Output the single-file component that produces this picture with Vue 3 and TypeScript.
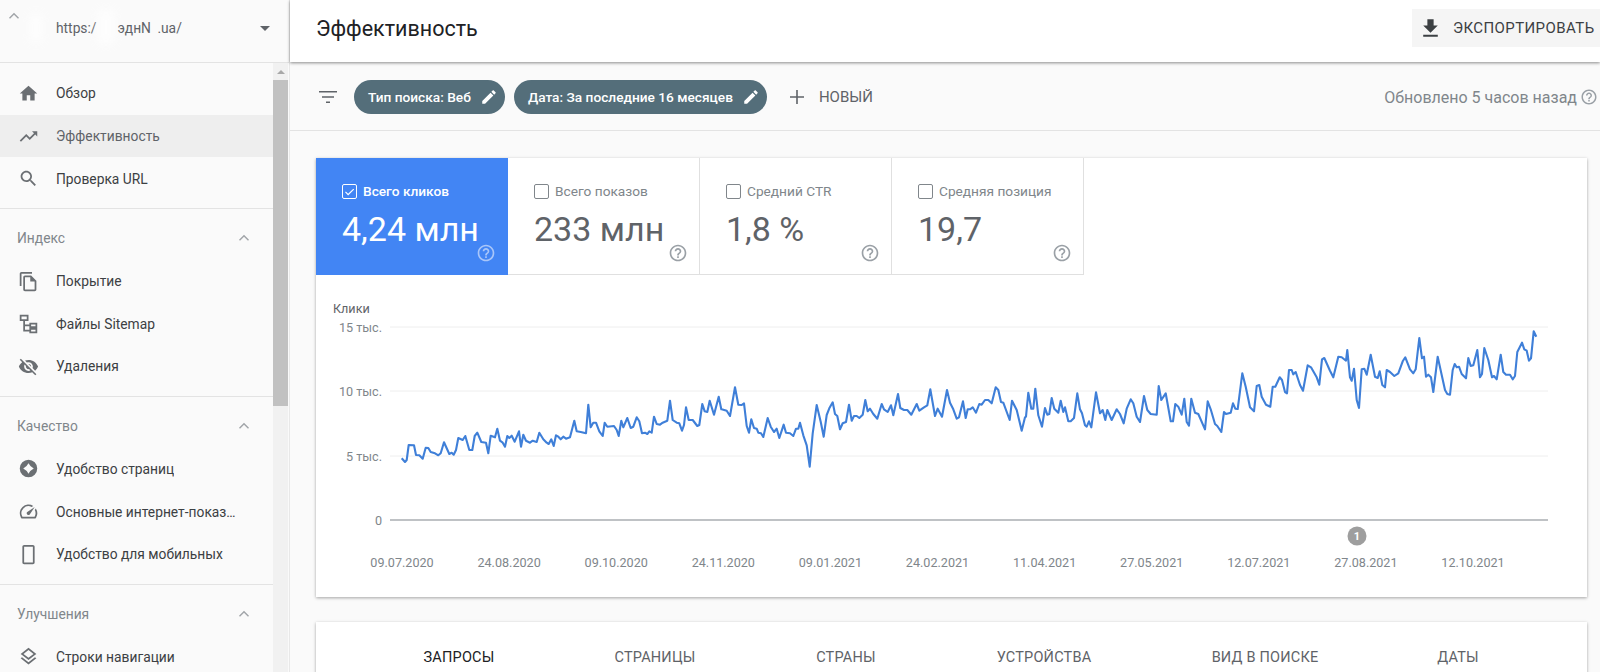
<script setup lang="ts">
import { computed } from 'vue';

type NavItem = { label: string; icon: string; active?: boolean };
type NavSection = { title?: string; items: NavItem[] };
type Metric = { label: string; value: string; selected?: boolean };

const icons: Record<string, string> = {
  home: 'M10 20v-6h4v6h5v-8h3L12 3 2 12h3v8z',
  trend: 'M16 6l2.29 2.29-4.88 4.88-4-4L2 16.59 3.41 18l6-6 4 4 6.3-6.29L22 12V6z',
  search: 'M15.5 14h-.79l-.28-.27C15.41 12.59 16 11.11 16 9.5 16 5.91 13.09 3 9.5 3S3 5.91 3 9.5 5.91 16 9.5 16c1.61 0 3.09-.59 4.23-1.57l.27.28v.79l5 4.99L20.49 19l-4.99-5zm-6 0C7.01 14 5 11.99 5 9.5S7.01 5 9.5 5 14 7.01 14 9.5 11.99 14 9.5 14z',
  copy: 'M16 1H4c-1.1 0-2 .9-2 2v14h2V3h12V1zm-1 4H8c-1.1 0-1.99.9-1.99 2L6 21c0 1.1.89 2 1.99 2H19c1.1 0 2-.9 2-2V11l-6-6zM8 21V7h6v5h5v9H8z',
  sitemap: 'M2 2h10v7H8v4h5v-2h9v6h-9v-2H8v4h5v-2h9v6h-9v-2H6V9H2V2zm2 2v3h6V4H4zm11 9v2h5v-2h-5zm0 6v2h5v-2h-5z',
  eyeOff: 'M12 7c2.76 0 5 2.24 5 5 0 .65-.13 1.26-.36 1.83l2.92 2.92c1.51-1.26 2.7-2.89 3.43-4.75-1.73-4.39-6-7.5-11-7.5-1.4 0-2.74.25-3.98.7l2.16 2.16C10.74 7.13 11.35 7 12 7zM2 4.27l2.28 2.28.46.46C3.08 8.3 1.78 10.02 1 12c1.73 4.39 6 7.5 11 7.5 1.55 0 3.03-.3 4.38-.84l.42.42L19.73 22 21 20.73 3.27 3 2 4.27zM7.53 9.8l1.55 1.55c-.05.21-.08.43-.08.65 0 1.66 1.34 3 3 3 .22 0 .44-.03.65-.08l1.55 1.55c-.67.33-1.41.53-2.2.53-2.76 0-5-2.24-5-5 0-.79.2-1.53.53-2.2zm4.31-.78l3.15 3.15.02-.16c0-1.66-1.34-3-3-3l-.17.01z',
  star: 'M12 2a10 10 0 1 0 0 20 10 10 0 0 0 0-20zm0 4q2 4 6 6-4 2-6 6-2-4-6-6 4-2 6-6z',
  speed: 'M20.38 8.57l-1.23 1.85a8 8 0 0 1-.22 7.58H5.07A8 8 0 0 1 15.58 6.85l1.85-1.23A10 10 0 0 0 3.35 19a2 2 0 0 0 1.72 1h13.85a2 2 0 0 0 1.74-1 10 10 0 0 0-.27-10.44zm-9.79 6.84a2 2 0 0 0 2.83 0l5.66-8.49-8.49 5.66a2 2 0 0 0 0 2.83z',
  phone: 'M7 1h10c1.1 0 2 .9 2 2v18c0 1.1-.9 2-2 2H7c-1.1 0-2-.9-2-2V3c0-1.1.9-2 2-2zm0 2v18h10V3H7z',
  layers: 'M11.99 18.54l-7.37-5.73L3 14.07l9 7 9-7-1.63-1.27-7.38 5.74zM12 16l7.36-5.73L21 9l-9-7-9 7 1.63 1.27L12 16zm0-11.47L17.74 9 12 13.47 6.26 9 12 4.53z',
  download: 'M19 9h-4V3H9v6H5l7 7 7-7zM5 18v2h14v-2H5z',
  edit: 'M3 17.25V21h3.75L17.81 9.94l-3.75-3.75L3 17.25zM20.71 7.04c.39-.39.39-1.02 0-1.41l-2.34-2.34c-.39-.39-1.02-.39-1.41 0l-1.83 1.83 3.75 3.75 1.83-1.83z',
  add: 'M19 12.8h-6.2V19h-1.6v-6.2H5v-1.6h6.2V5h1.6v6.2H19v1.6z',
  help: 'M11 18h2v-2h-2v2zm1-16C6.48 2 2 6.48 2 12s4.48 10 10 10 10-4.48 10-10S17.52 2 12 2zm0 18c-4.41 0-8-3.59-8-8s3.59-8 8-8 8 3.59 8 8-3.59 8-8 8zm0-14c-2.21 0-4 1.79-4 4h2c0-1.1.9-2 2-2s2 .9 2 2c0 2-3 1.75-3 5h2c0-2.25 3-2.5 3-5 0-2.21-1.79-4-4-4z',
  filter: 'M10 18h4v-1.5h-4V18zM3 6v1.5h18V6H3zm3 6.75h12v-1.5H6v1.5z',
  chevron: 'M12 8l-6 6 1.2 1.2L12 10.4l4.8 4.8L18 14z',
  caret: 'M7 10l5 5 5-5z',
  check: 'M9.5 16.2L5.3 12l-1.5 1.5 5.7 5.7L20.5 8.2 19 6.7z',
};

const sections: NavSection[] = [
  {
    items: [
      { label: 'Обзор', icon: 'home' },
      { label: 'Эффективность', icon: 'trend', active: true },
      { label: 'Проверка URL', icon: 'search' },
    ],
  },
  {
    title: 'Индекс',
    items: [
      { label: 'Покрытие', icon: 'copy' },
      { label: 'Файлы Sitemap', icon: 'sitemap' },
      { label: 'Удаления', icon: 'eyeOff' },
    ],
  },
  {
    title: 'Качество',
    items: [
      { label: 'Удобство страниц', icon: 'star' },
      { label: 'Основные интернет-показатели', icon: 'speed' },
      { label: 'Удобство для мобильных', icon: 'phone' },
    ],
  },
  {
    title: 'Улучшения',
    items: [{ label: 'Строки навигации', icon: 'layers' }],
  },
];

const metrics: Metric[] = [
  { label: 'Всего кликов', value: '4,24 млн', selected: true },
  { label: 'Всего показов', value: '233 млн' },
  { label: 'Средний CTR', value: '1,8 %' },
  { label: 'Средняя позиция', value: '19,7' },
];

const tabs = ['ЗАПРОСЫ', 'СТРАНИЦЫ', 'СТРАНЫ', 'УСТРОЙСТВА', 'ВИД В ПОИСКЕ', 'ДАТЫ'];

// the svg keeps page coordinates, so everything below is read straight off the picture
const gridLines = [
  { y: 327, label: '15 тыс.' },
  { y: 391, label: '10 тыс.' },
  { y: 456, label: '5 тыс.' },
];

const dates = [
  '09.07.2020', '24.08.2020', '09.10.2020', '24.11.2020', '09.01.2021', '24.02.2021',
  '11.04.2021', '27.05.2021', '12.07.2021', '27.08.2021', '12.10.2021',
].map((label, i) => ({ label, x: 402 + i * 107.1 }));

// clicks line, traced in three pieces (x, y pairs at 3x, each from its own left edge)
const traces: { left: number; pts: number[] }[] = [
  {
    left: 310,
    pts: [275,505,285,516,290,510,296,465,312,466,318,495,328,496,338,506,347,473,355,474,362,486,375,490,385,496,392,490,402,457,418,492,425,488,431,494,438,480,445,444,458,450,466,438,478,480,487,480,494,438,502,428,514,456,528,458,535,490,542,437,555,442,562,416,570,452,578,458,585,470,592,438,598,444,605,437,614,455,627,424,633,470,640,434,648,452,660,458,668,452,680,456,688,428,700,448,710,458,716,462,724,448,731,468,738,436,745,440,752,448,760,440,768,446,780,442,793,392,800,424,812,426,828,430,835,344,842,412,850,398,858,398,868,424,878,438,884,398,892,410,912,408,920,420,926,438,934,392,940,412,952,384,962,414,970,410,980,382,988,394,996,430,1005,428,1012,432,1018,424,1025,428,1032,380,1040,402,1050,404,1058,398,1072,392,1080,332,1088,390,1100,398,1108,400,1116,422,1122,405,1128,352,1136,390,1148,390,1162,408,1168,405,1177,342,1184,364,1192,366,1199,332,1212,374,1226,320,1234,358],
  },
  {
    left: 720,
    pts: [5,358,20,362,30,378,45,292,55,344,65,345,72,340,80,408,87,428,94,388,102,414,110,416,115,428,123,430,130,441,143,384,152,410,162,426,170,416,178,444,191,404,198,428,210,430,220,438,228,416,235,416,240,398,250,436,260,466,269,530,278,430,290,345,302,395,311,440,320,375,328,355,338,337,345,372,352,378,360,418,368,400,378,396,387,344,395,392,402,378,410,378,418,384,428,374,436,330,443,364,450,356,460,372,472,386,485,342,492,358,503,366,513,346,520,376,534,312,541,354,552,360,562,360,574,374,590,342,598,362,612,352,622,346,631,298,645,378,653,356,666,380,681,300,690,338,700,358,710,386,717,382,729,334,737,384,743,358,750,358,758,352,768,368,778,342,785,344,795,330,805,330,815,340,827,292,835,300,843,336,850,338,869,390,876,332,890,360,898,392,905,422,915,382,918,380,925,308,934,356,940,356,946,296,955,376,966,410,975,354,982,374,988,372,995,324,1003,356,1015,368,1022,332,1030,366,1035,352,1045,394,1052,394,1062,384,1072,310,1080,358,1086,370,1095,406,1100,410,1107,394,1114,412,1128,307,1140,370,1148,360,1156,390,1162,360,1175,390,1190,358,1200,372,1211,400,1220,356,1232,328,1240,340,1250,380,1260,396],
  },
  {
    left: 1130,
    pts: [30,396,42,318,52,360,62,372,80,374,86,288,94,330,107,310,122,394,129,394,136,342,145,350,155,374,163,326,170,396,177,407,184,326,195,368,205,372,225,418,233,334,242,358,255,402,262,408,274,426,282,366,288,372,302,368,309,340,316,356,323,357,337,250,347,290,360,352,372,364,380,288,388,285,395,320,408,344,421,350,428,290,436,290,449,262,456,270,465,306,471,310,477,240,485,240,490,253,497,246,510,285,519,302,533,226,543,232,560,262,568,284,576,208,583,204,600,242,610,262,625,200,635,202,648,212,652,180,660,262,665,272,672,236,680,330,687,354,695,238,703,236,710,254,722,194,735,260,743,264,749,244,757,285,765,292,770,240,780,246,793,258,805,250,818,214,826,202,840,238,850,250,857,238,868,144,876,205,882,200,888,260,895,254,903,262,910,306,923,200,935,255,945,300,952,312,960,314,968,240,974,222,980,232,987,230,995,252,1008,265,1015,204,1022,228,1030,226,1042,180,1050,262,1056,252,1063,174,1075,210,1086,262,1092,258,1100,268,1112,194,1120,246,1128,254,1140,254,1148,268,1155,258,1162,186,1176,158,1183,178,1190,182,1197,212,1203,205,1211,124,1219,140],
  },
];

const linePoints = computed(() => {
  const out: string[] = [];
  for (const t of traces) {
    for (let i = 0; i < t.pts.length; i += 2) {
      out.push(`${(t.left + t.pts[i] / 3).toFixed(1)},${(290 + t.pts[i + 1] / 3).toFixed(1)}`);
    }
  }
  return out.join(' ');
});
</script>

<template>
  <div class="page">
    <aside class="sidebar">
      <div class="site-head">
        <svg class="site-chevron" viewBox="0 0 24 24"><path :d="icons.chevron" /></svg>
        <span class="smudge smudge-logo"></span>
        <span class="site-url"><span>https:/</span><span class="site-url-rest">эднN .ua/</span></span>
        <span class="smudge smudge-url"></span>
        <svg class="site-caret" viewBox="0 0 24 24"><path :d="icons.caret" /></svg>
      </div>
      <div class="nav-wrap">
        <nav class="nav">
          <section v-for="(section, i) in sections" :key="i" class="nav-section">
            <div v-if="section.title" class="nav-title">
              <span>{{ section.title }}</span>
              <svg viewBox="0 0 24 24"><path :d="icons.chevron" /></svg>
            </div>
            <div v-for="item in section.items" :key="item.label" class="nav-item" :class="{ active: item.active }">
              <svg viewBox="0 0 24 24"><path :d="icons[item.icon]" /></svg>
              <span>{{ item.label }}</span>
            </div>
          </section>
        </nav>
        <div class="scrollbar">
          <div class="scroll-arrow"></div>
          <div class="scroll-thumb"></div>
        </div>
      </div>
    </aside>

    <main class="main">
      <header class="top">
        <h1>Эффективность</h1>
        <div class="export">
          <svg viewBox="0 0 24 24"><path :d="icons.download" /></svg>
          <span>ЭКСПОРТИРОВАТЬ</span>
        </div>
      </header>

      <div class="filters">
        <svg class="filter-icon" viewBox="0 0 24 24"><path :d="icons.filter" /></svg>
        <div class="chip">
          <span>Тип поиска: Веб</span>
          <svg viewBox="0 0 24 24"><path :d="icons.edit" /></svg>
        </div>
        <div class="chip">
          <span>Дата: За последние 16 месяцев</span>
          <svg viewBox="0 0 24 24"><path :d="icons.edit" /></svg>
        </div>
        <div class="add-new">
          <svg viewBox="0 0 24 24"><path :d="icons.add" /></svg>
          <span>НОВЫЙ</span>
        </div>
        <div class="updated">
          <span>Обновлено 5 часов назад</span>
          <svg viewBox="0 0 24 24"><path :d="icons.help" /></svg>
        </div>
      </div>

      <div class="content">
        <div class="card chart-card">
          <div class="metrics">
            <div v-for="m in metrics" :key="m.label" class="metric" :class="{ selected: m.selected }">
              <div class="metric-label">
                <span class="checkbox">
                  <svg v-if="m.selected" viewBox="0 0 24 24"><path :d="icons.check" /></svg>
                </span>
                <span>{{ m.label }}</span>
              </div>
              <div class="metric-value">{{ m.value }}</div>
              <svg class="metric-help" viewBox="0 0 24 24"><path :d="icons.help" /></svg>
            </div>
          </div>
          <svg class="chart" viewBox="316 275 1271 322">
            <text x="333" y="313" class="axis-title">Клики</text>
            <g v-for="g in gridLines" :key="g.y">
              <line x1="390" x2="1548" :y1="g.y" :y2="g.y" class="grid" />
              <text x="382" :y="g.y + 4.5" text-anchor="end" class="tick">{{ g.label }}</text>
            </g>
            <line x1="390" x2="1548" y1="520" y2="520" class="axis" />
            <text x="382" y="524.5" text-anchor="end" class="tick">0</text>
            <polyline :points="linePoints" class="series" />
            <circle cx="1357" cy="536" r="9.5" class="marker" />
            <text x="1357" y="540" text-anchor="middle" class="marker-text">1</text>
            <text v-for="d in dates" :key="d.label" :x="d.x" y="566.5" text-anchor="middle" class="tick">{{ d.label }}</text>
          </svg>
        </div>

        <div class="card tabs-card">
          <div v-for="(tab, i) in tabs" :key="tab" class="tab" :class="{ current: i === 0 }">{{ tab }}</div>
        </div>
      </div>
    </main>
  </div>
</template>

<style>
html,
body {
  margin: 0;
  overflow: hidden;
}
</style>

<style scoped>
.page {
  display: flex;
  width: 1600px;
  height: 672px;
  overflow: hidden;
  background: #fafafa;
  font-family: Roboto, "Liberation Sans", sans-serif;
}

.sidebar {
  display: flex;
  flex-direction: column;
  flex: 0 0 290px;
  box-sizing: border-box;
  border-right: 1px solid #e8e8e8;
  background: #fafafa;
}

.site-head {
  display: flex;
  align-items: center;
  flex: 0 0 63px;
  box-sizing: border-box;
  height: 63px;
  border-bottom: 1px solid #e3e3e3;
  position: relative;
  padding: 0 12px 6px 56px;
}

.site-chevron {
  position: absolute;
  left: 4px;
  top: 6px;
  width: 20px;
  height: 20px;
  fill: #a0a4a8;
}

/* the blurred-out logo and part of the address */
.smudge {
  position: absolute;
  background: #fff;
  opacity: 0.7;
  filter: blur(4px);
}

.smudge-logo {
  left: 30px;
  top: 14px;
  width: 12px;
  height: 28px;
}

.smudge-url {
  left: 98px;
  top: 10px;
  width: 16px;
  height: 34px;
}

.site-url {
  flex: 1;
  display: flex;
  font-size: 13.8px;
  word-spacing: 3px;
  color: #5f6368;
}

.site-url-rest {
  margin-left: 21px;
}

.site-caret {
  width: 24px;
  height: 24px;
  fill: #5f6368;
}

.nav-wrap {
  display: flex;
  flex: 1;
  min-height: 0;
}

.nav {
  flex: 0 0 273px;
  width: 273px;
  padding-top: 1px;
}

.nav-section {
  padding: 8px 0;
  border-bottom: 1px solid #e3e3e3;
}

.nav-title {
  display: flex;
  align-items: center;
  justify-content: space-between;
  height: 42.7px;
  padding: 0 19px 0 17px;
  font-size: 13.8px;
  color: #80868b;
}

.nav-title svg {
  width: 20px;
  height: 20px;
  fill: #a0a4a8;
}

.nav-item {
  display: flex;
  align-items: center;
  height: 42.7px;
  padding: 0 34px 0 17.5px;
  font-size: 13.8px;
  color: #3c4043;
}

.nav-item svg {
  flex: 0 0 21px;
  width: 21px;
  height: 21px;
  margin-right: 17.5px;
  fill: #6b6f73;
}

.nav-item span {
  white-space: nowrap;
  overflow: hidden;
  text-overflow: ellipsis;
}

.nav-item.active {
  background: #eeeeee;
  color: #5f6368;
}

.scrollbar {
  flex: 0 0 15px;
  background: #f1f1f1;
}

.scroll-arrow {
  height: 17px;
  position: relative;
}

.scroll-arrow::after {
  content: "";
  position: absolute;
  left: 4px;
  top: 7px;
  border-left: 4px solid transparent;
  border-right: 4px solid transparent;
  border-bottom: 4px solid #a8a8a8;
}

.scroll-thumb {
  height: 326px;
  background: #c1c1c1;
}

.main {
  flex: 1;
  min-width: 0;
  display: flex;
  flex-direction: column;
}

.top {
  display: flex;
  align-items: center;
  justify-content: space-between;
  flex: 0 0 62px;
  padding: 0 0 6px 26px;
  box-sizing: border-box;
  background: #fff;
  box-shadow: 0 1px 3px rgba(0, 0, 0, 0.45);
  position: relative;
}

.top h1 {
  margin: 0;
  font-size: 21.5px;
  font-weight: 400;
  color: #202124;
}

.export {
  display: flex;
  align-items: center;
  width: 188px;
  height: 38px;
  padding-left: 6px;
  box-sizing: border-box;
  background: #f5f5f5;
  font-size: 15px;
  letter-spacing: 0.4px;
  color: #3c4043;
  white-space: nowrap;
}

.export svg {
  width: 25px;
  height: 25px;
  margin-right: 10px;
  fill: #3c4043;
}

.filters {
  display: flex;
  align-items: center;
  flex: 0 0 69px;
  box-sizing: border-box;
  padding: 2px 0 0 26px;
  border-bottom: 1px solid #e3e3e3;
}

.filter-icon {
  width: 24px;
  height: 24px;
  margin-right: 14px;
  fill: #5f6368;
}

.chip {
  display: flex;
  align-items: center;
  height: 34px;
  margin-right: 9px;
  padding: 0 7px 0 14px;
  border-radius: 17px;
  background: #546e7a;
  color: #fff;
  font-size: 13.7px;
  font-weight: 500;
  white-space: nowrap;
}

.chip svg {
  width: 18px;
  height: 18px;
  margin-left: 9px;
  fill: #fff;
}

.add-new {
  display: flex;
  align-items: center;
  margin-left: 9px;
  font-size: 15px;
  color: #5f6368;
}

.add-new svg {
  width: 24px;
  height: 24px;
  margin-right: 10px;
  fill: #5f6368;
}

.updated {
  display: flex;
  align-items: center;
  margin-left: auto;
  padding-right: 2px;
  font-size: 16px;
  color: #80868b;
  white-space: nowrap;
}

.updated svg {
  width: 18px;
  height: 18px;
  margin-left: 3px;
  fill: #9aa0a6;
}

.content {
  padding: 27px 13px 0 26px;
}

.card {
  background: #fff;
  box-shadow: 0 1px 3px rgba(0, 0, 0, 0.35);
}

.metrics {
  display: flex;
  height: 117px;
}

.metric {
  position: relative;
  flex: 0 0 192px;
  box-sizing: border-box;
  padding: 26px 0 0 26px;
  border-right: 1px solid #e0e0e0;
  border-bottom: 1px solid #e0e0e0;
  color: #80868b;
}

.metric.selected {
  background: #4285f4;
  border-color: #4285f4;
  color: #fff;
}

.metric-label {
  display: flex;
  align-items: center;
  font-size: 13.7px;
  height: 14px;
}

.metric.selected .metric-label {
  font-weight: 500;
}

.checkbox {
  display: flex;
  box-sizing: border-box;
  width: 15px;
  height: 15px;
  margin-right: 6px;
  border: 1px solid #80868b;
  border-radius: 2px;
}

.metric.selected .checkbox {
  border-color: #fff;
}

.checkbox svg {
  width: 13px;
  height: 13px;
  fill: #fff;
}

.metric-value {
  margin-top: 11px;
  font-size: 34px;
  line-height: 40px;
  color: #5f6368;
}

.metric.selected .metric-value {
  color: #fff;
}

.metric-help {
  position: absolute;
  right: 11px;
  bottom: 11px;
  width: 20px;
  height: 20px;
  fill: #9aa0a6;
}

.metric.selected .metric-help {
  fill: #a9c6f9;
}

.chart {
  display: block;
  width: 1271px;
  height: 322px;
}

.chart text {
  font-family: Roboto, "Liberation Sans", sans-serif;
}

.axis-title {
  font-size: 12.6px;
  fill: #5f6368;
}

.tick {
  font-size: 12.6px;
  fill: #80868b;
}

.grid {
  stroke: #eeeeee;
  stroke-width: 1;
}

.axis {
  stroke: #80868b;
  stroke-width: 1.2;
}

.series {
  fill: none;
  stroke: #3f7fd8;
  stroke-width: 2.1;
  stroke-linejoin: round;
}

.marker {
  fill: #9e9e9e;
}

.marker-text {
  font-size: 11px;
  font-weight: 700;
  fill: #fff;
}

.tabs-card {
  display: grid;
  grid-template-columns: 194px 198px 184px 212px 230px 156px;
  margin-top: 25px;
  height: 70px;
  padding: 25px 0 0 46px;
  box-sizing: border-box;
}

.tab {
  text-align: center;
  font-size: 14.5px;
  letter-spacing: 0.2px;
  color: #5f6368;
  line-height: 22px;
  white-space: nowrap;
}

.tab.current {
  color: #202124;
}
</style>
